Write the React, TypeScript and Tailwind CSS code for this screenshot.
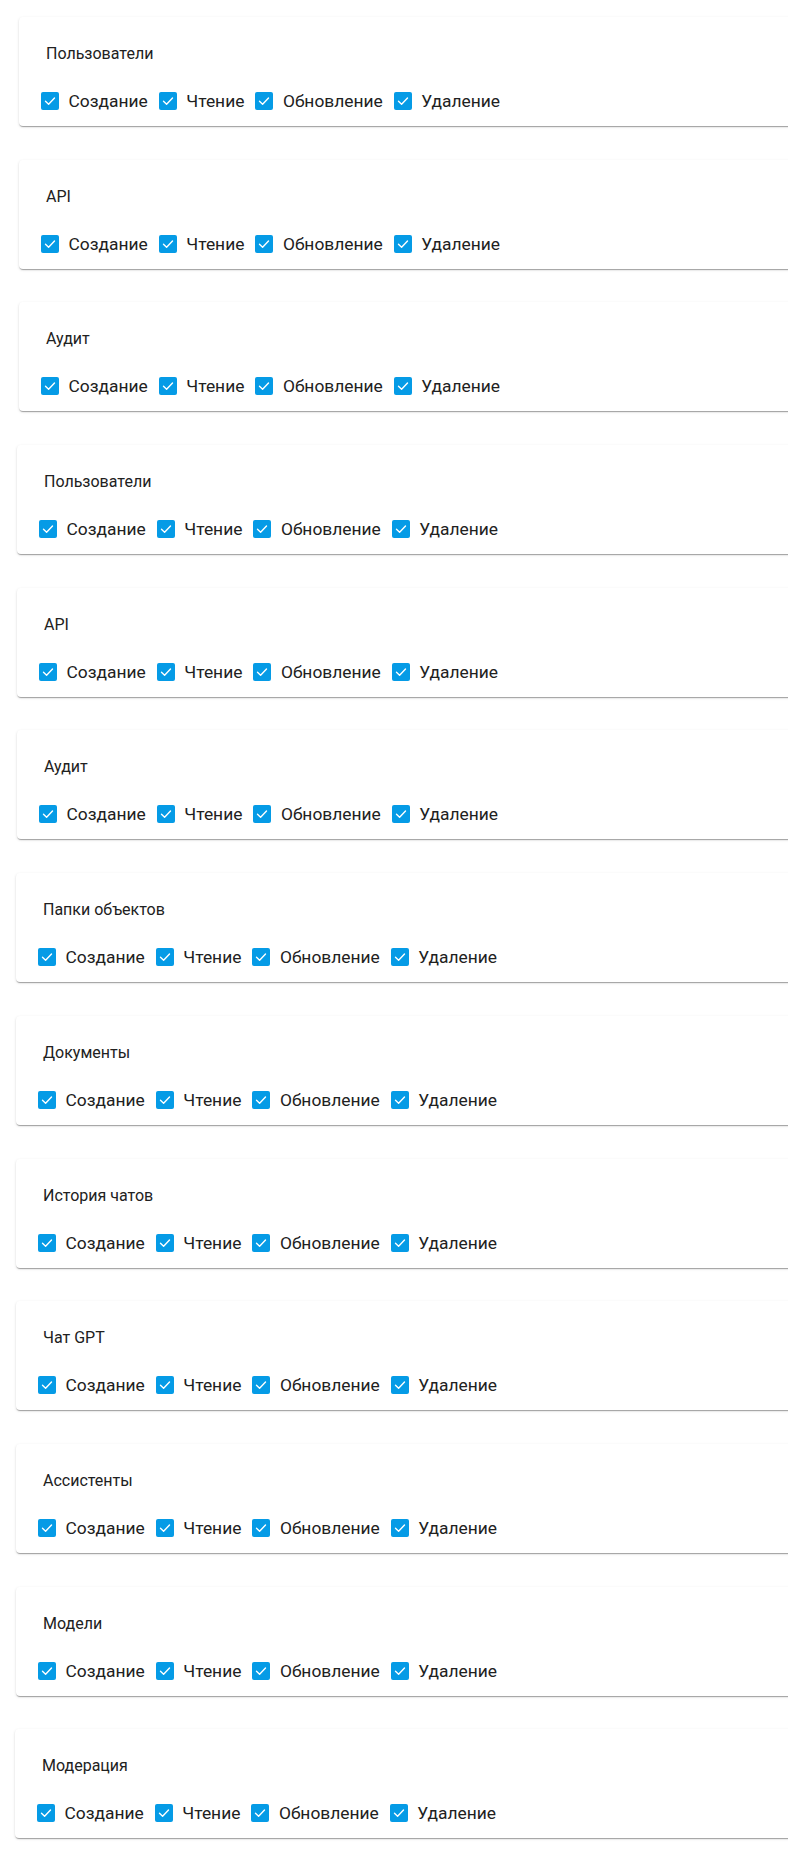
import React from "react";

const sections = [
  { title: "Пользователи", ml: "ml-[19px]" },
  { title: "API", ml: "ml-[19px]" },
  { title: "Аудит", ml: "ml-[19px]" },
  { title: "Пользователи", ml: "ml-[17px]" },
  { title: "API", ml: "ml-[17px]" },
  { title: "Аудит", ml: "ml-[17px]" },
  { title: "Папки объектов", ml: "ml-[16px]" },
  { title: "Документы", ml: "ml-[16px]" },
  { title: "История чатов", ml: "ml-[16px]" },
  { title: "Чат GPT", ml: "ml-[16px]" },
  { title: "Ассистенты", ml: "ml-[16px]" },
  { title: "Модели", ml: "ml-[16px]" },
  { title: "Модерация", ml: "ml-[15px]" },
];

const actions = ["Создание", "Чтение", "Обновление", "Удаление"];

const CheckBox = () => (
  <svg width="18" height="18" viewBox="0 0 18 18" className="shrink-0">
    <rect x="0" y="0" width="18" height="18" rx="2" fill="#059be6" />
    <path d="M4.5 9.3 L7.6 12.2 L13.5 6" fill="none" stroke="#fff" strokeWidth="1.4" strokeLinecap="round" strokeLinejoin="round" />
  </svg>
);

const PermissionCard = ({ title, ml }: { title: string; ml: string }) => (
  <div
    className={`${ml} w-[820px] h-[109px] shrink-0 bg-white rounded shadow-[0_2px_1px_-1px_rgba(0,0,0,0.2),0_1px_1px_0_rgba(0,0,0,0.14),0_1px_3px_0_rgba(0,0,0,0.12)]`}
  >
    <div className="pt-[27px] pl-[27px] text-[16px] leading-5 text-[#212121]">{title}</div>
    <div className="mt-[25px] pl-[22px] flex items-center h-6">
      {actions.map((a) => (
        <label key={a} className="flex items-center mr-[11px]">
          <CheckBox />
          <span className="ml-[9.5px] text-[17.4px] leading-6 text-[#212121]">{a}</span>
        </label>
      ))}
    </div>
  </div>
);

export default function App() {
  return (
    <div className="w-[788px] h-[1852px] overflow-hidden bg-white font-['Roboto','Liberation_Sans',sans-serif]">
      <div className="pt-[17px] flex flex-col gap-[33.7px]">
        {sections.map((s, i) => (
          <PermissionCard key={i} title={s.title} ml={s.ml} />
        ))}
      </div>
    </div>
  );
}
